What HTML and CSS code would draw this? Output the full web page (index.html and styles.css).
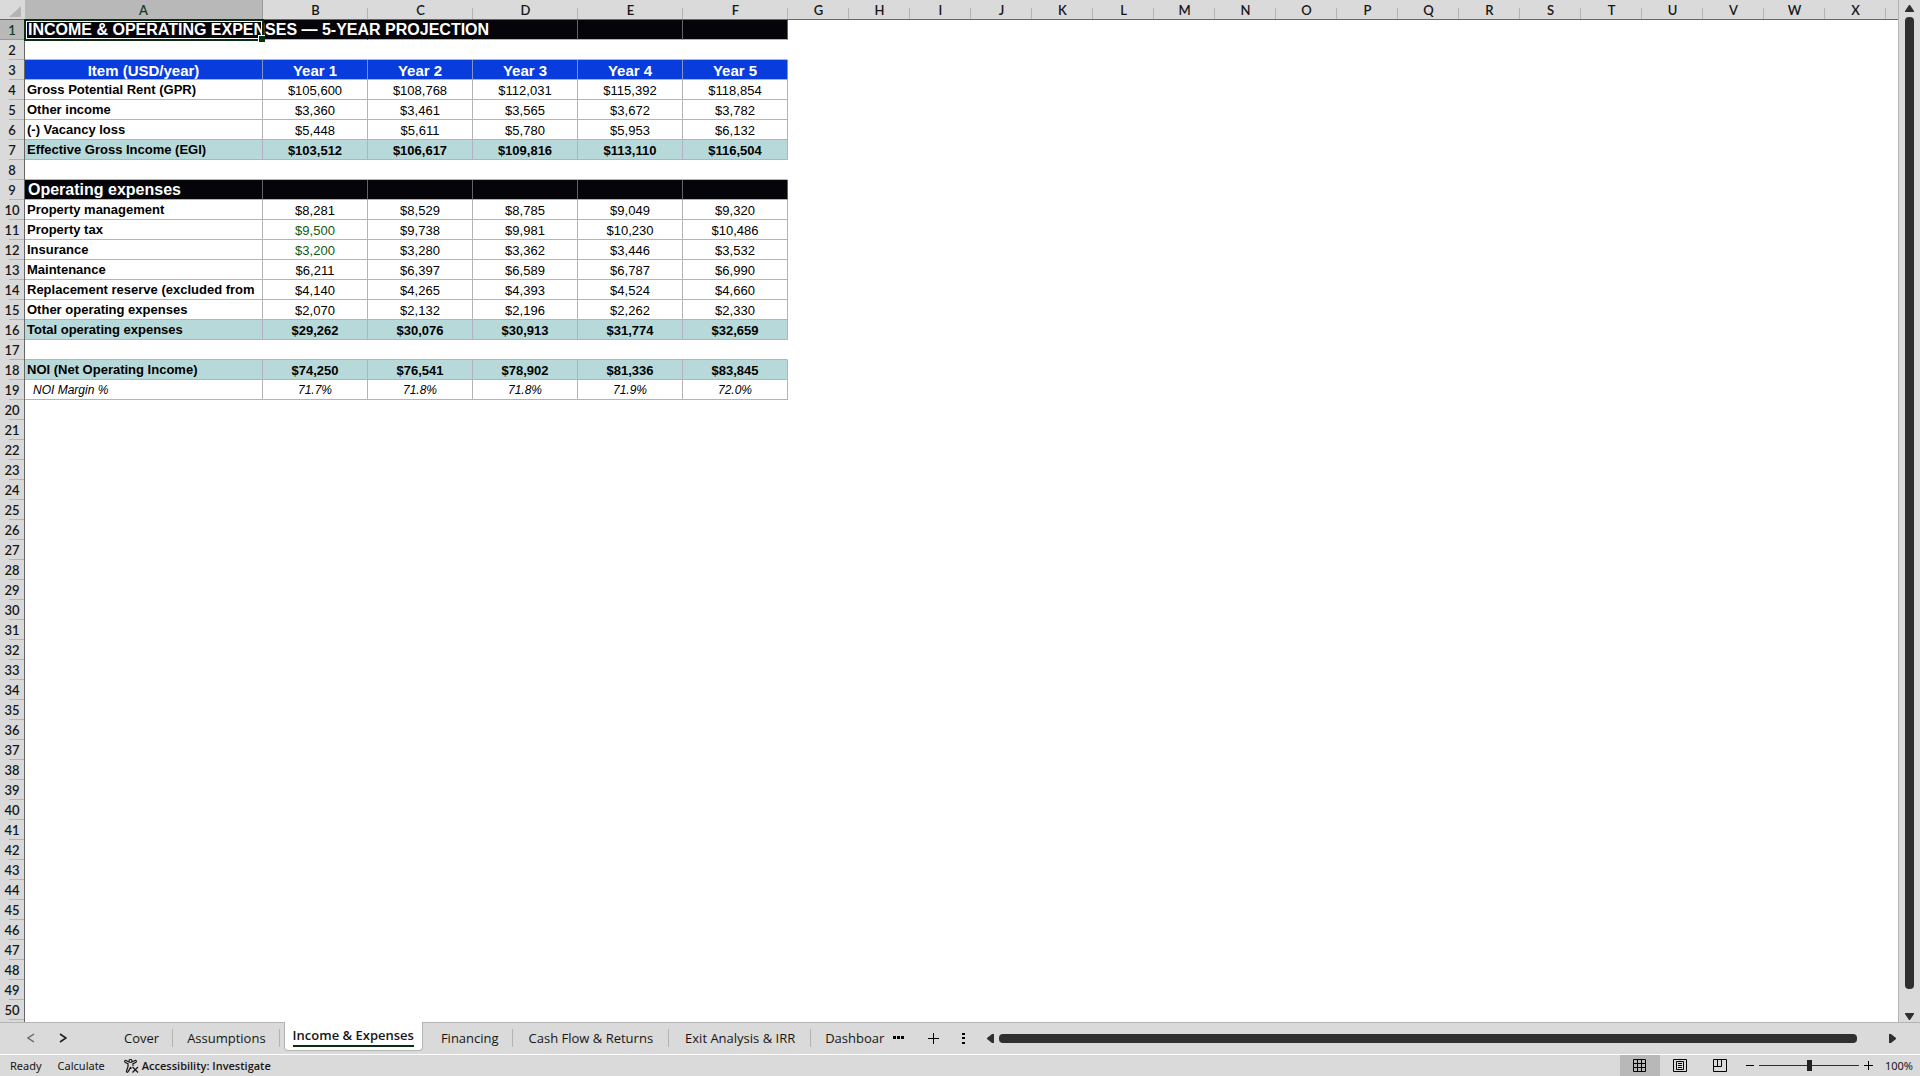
FILE: index.html
```html
<!DOCTYPE html>
<html lang="en">
<head>
<meta charset="utf-8">
<title>Income &amp; Expenses</title>
<link rel="stylesheet" href="styles.css">
</head>
<body>
<main class="workspace">
  <div class="grid-pane">
    <table class="sheet">
      <colgroup>
        <col class="col-index"><col class="col-item">
        <col class="col-year" span="5">
        <col class="col-empty" span="18">
        <col>
      </colgroup>
      <thead>
        <tr>
          <td class="corner"><svg width="12" height="11" viewBox="0 0 12 11"><path d="M12 0v11H0z" fill="#b4b4b4"/></svg></td>
          <th class="active">A</th><th>B</th><th>C</th><th>D</th><th>E</th><th>F</th><th>G</th><th>H</th><th>I</th><th>J</th><th>K</th><th>L</th><th>M</th><th>N</th><th>O</th><th>P</th><th>Q</th><th>R</th><th>S</th><th>T</th><th>U</th><th>V</th><th>W</th><th>X</th><td class="rest"></td>
        </tr>
      </thead>
      <tbody>
        <tr class="title"><th class="active">1</th><td class="selected">INCOME &amp; OPERATING EXPENSES — 5-YEAR PROJECTION</td><td class="open"></td><td class="open"></td><td></td><td></td><td></td></tr>
        <tr class="spacer"><th>2</th><td colspan="6"></td></tr>
        <tr class="years"><th>3</th><td>Item (USD/year)</td><td>Year 1</td><td>Year 2</td><td>Year 3</td><td>Year 4</td><td>Year 5</td></tr>
        <tr><th>4</th><td>Gross Potential Rent (GPR)</td><td>$105,600</td><td>$108,768</td><td>$112,031</td><td>$115,392</td><td>$118,854</td></tr>
        <tr><th>5</th><td>Other income</td><td>$3,360</td><td>$3,461</td><td>$3,565</td><td>$3,672</td><td>$3,782</td></tr>
        <tr><th>6</th><td>(-) Vacancy loss</td><td>$5,448</td><td>$5,611</td><td>$5,780</td><td>$5,953</td><td>$6,132</td></tr>
        <tr class="total"><th>7</th><td>Effective Gross Income (EGI)</td><td>$103,512</td><td>$106,617</td><td>$109,816</td><td>$113,110</td><td>$116,504</td></tr>
        <tr class="spacer"><th>8</th><td colspan="6"></td></tr>
        <tr class="title"><th>9</th><td>Operating expenses</td><td></td><td></td><td></td><td></td><td></td></tr>
        <tr><th>10</th><td>Property management</td><td>$8,281</td><td>$8,529</td><td>$8,785</td><td>$9,049</td><td>$9,320</td></tr>
        <tr><th>11</th><td>Property tax</td><td class="linked">$9,500</td><td>$9,738</td><td>$9,981</td><td>$10,230</td><td>$10,486</td></tr>
        <tr><th>12</th><td>Insurance</td><td class="linked">$3,200</td><td>$3,280</td><td>$3,362</td><td>$3,446</td><td>$3,532</td></tr>
        <tr><th>13</th><td>Maintenance</td><td>$6,211</td><td>$6,397</td><td>$6,589</td><td>$6,787</td><td>$6,990</td></tr>
        <tr><th>14</th><td>Replacement reserve (excluded from</td><td>$4,140</td><td>$4,265</td><td>$4,393</td><td>$4,524</td><td>$4,660</td></tr>
        <tr><th>15</th><td>Other operating expenses</td><td>$2,070</td><td>$2,132</td><td>$2,196</td><td>$2,262</td><td>$2,330</td></tr>
        <tr class="total"><th>16</th><td>Total operating expenses</td><td>$29,262</td><td>$30,076</td><td>$30,913</td><td>$31,774</td><td>$32,659</td></tr>
        <tr class="spacer"><th>17</th><td colspan="6"></td></tr>
        <tr class="total"><th>18</th><td>NOI (Net Operating Income)</td><td>$74,250</td><td>$76,541</td><td>$78,902</td><td>$81,336</td><td>$83,845</td></tr>
        <tr class="margin"><th>19</th><td>NOI Margin %</td><td>71.7%</td><td>71.8%</td><td>71.8%</td><td>71.9%</td><td>72.0%</td></tr>
      </tbody>
      <tbody class="blank">
        <tr><th>20</th></tr>
        <tr><th>21</th></tr>
        <tr><th>22</th></tr>
        <tr><th>23</th></tr>
        <tr><th>24</th></tr>
        <tr><th>25</th></tr>
        <tr><th>26</th></tr>
        <tr><th>27</th></tr>
        <tr><th>28</th></tr>
        <tr><th>29</th></tr>
        <tr><th>30</th></tr>
        <tr><th>31</th></tr>
        <tr><th>32</th></tr>
        <tr><th>33</th></tr>
        <tr><th>34</th></tr>
        <tr><th>35</th></tr>
        <tr><th>36</th></tr>
        <tr><th>37</th></tr>
        <tr><th>38</th></tr>
        <tr><th>39</th></tr>
        <tr><th>40</th></tr>
        <tr><th>41</th></tr>
        <tr><th>42</th></tr>
        <tr><th>43</th></tr>
        <tr><th>44</th></tr>
        <tr><th>45</th></tr>
        <tr><th>46</th></tr>
        <tr><th>47</th></tr>
        <tr><th>48</th></tr>
        <tr><th>49</th></tr>
        <tr><th>50</th></tr>
      </tbody>
    </table>
  </div>
  <div class="v-scroll">
    <button class="arrow" aria-label="Scroll up"><svg width="9" height="8" viewBox="0 0 9 8"><path d="M4 0h1l4 6v1H0V6z"/></svg></button>
    <div class="v-track"><div class="thumb"></div></div>
    <button class="arrow" aria-label="Scroll down"><svg width="9" height="8" viewBox="0 0 9 8"><path d="M4 7h1l4-6V0H0v1z"/></svg></button>
  </div>
</main>

<nav class="tab-bar" aria-label="Sheets">
  <div class="tab-arrows">
    <button aria-label="Previous sheet"><svg width="8" height="10" viewBox="0 0 8 10"><path d="M7 1L1 5l6 4" fill="none" stroke="#666" stroke-width="1.4"/></svg></button>
    <button aria-label="Next sheet"><svg width="8" height="10" viewBox="0 0 8 10"><path d="M1 1l6 4-6 4" fill="none" stroke="#222" stroke-width="1.7"/></svg></button>
  </div>
  <button class="tab">Cover</button>
  <button class="tab">Assumptions</button>
  <button class="tab current"><span>Income &amp; Expenses</span></button>
  <button class="tab">Financing</button>
  <button class="tab wide">Cash Flow &amp; Returns</button>
  <button class="tab wide">Exit Analysis &amp; IRR</button>
  <button class="tab last">Dashboar</button>
  <div class="tab-tools">
    <button aria-label="More sheets"><svg width="12" height="4" viewBox="0 0 12 4"><path d="M0 0h3v3H0zM4 0h3v3H4zM8 0h3v3H8z"/></svg></button>
    <button aria-label="New sheet"><svg width="11" height="11" viewBox="0 0 11 11"><path d="M5 0h1v5h5v1H6v5H5V6H0V5h5z"/></svg></button>
    <button aria-label="Resize tabs"><svg width="3" height="11" viewBox="0 0 3 11"><path d="M0 0h3v2H0zM0 4h3v2H0zM0 9h3v2H0z"/></svg></button>
  </div>
  <div class="h-scroll">
    <button class="arrow" aria-label="Scroll left"><svg width="7" height="9" viewBox="0 0 7 9"><path d="M0 4v1l5 4h2V0H5z"/></svg></button>
    <div class="h-track"><div class="thumb"></div></div>
    <button class="arrow" aria-label="Scroll right"><svg width="7" height="9" viewBox="0 0 7 9"><path d="M7 4v1L2 9H0V0h2z"/></svg></button>
  </div>
</nav>

<footer class="status-bar">
  <span>Ready</span>
  <span>Calculate</span>
  <button class="accessibility">
    <svg width="15" height="14" viewBox="0 0 15 14" fill="none" stroke="#161616" stroke-width="1.2"><circle cx="6.500" cy="2" r="1.500"/><path d="M5 3L2 1.500C.500 1 .200 3 1.300 3.500L4 4.700v3L2.500 12c-.3 1.500 1.200 1.700 1.700.6L6.500 8.500l1 1M8 3l3-1.500c1.500-.5 1.800 1.500.7 2L9 4.700V7M8.500 8l5.500 5.500M14 8l-5.500 5.500"/></svg>
    Accessibility: Investigate
  </button>
  <div class="views">
    <button class="view on" aria-label="Normal view"><svg width="13" height="13" viewBox="0 0 13 13"><path d="M.500.500h12v12H.500zM4.500 0v13M8.500 0v13M0 4.500h13M0 8.500h13"/></svg></button>
    <button class="view" aria-label="Page layout"><svg width="14" height="13" viewBox="0 0 14 13"><path d="M.500.500h13v12H.500zM3.500 2.500h7v8h-7zM5 4.500h4M5 6.500h4M5 8.500h4"/></svg></button>
    <button class="view" aria-label="Page break preview"><svg width="14" height="13" viewBox="0 0 14 13"><path d="M.500.500h13v12H.500zM.500 7.500h8v-7M4.500 0v7"/></svg></button>
  </div>
  <div class="zoom">
    <button aria-label="Zoom out"><svg width="8" height="9" viewBox="0 0 8 9"><path d="M0 4h8v1H0z"/></svg></button>
    <input type="range" min="0" max="100" value="51" aria-label="Zoom">
    <button aria-label="Zoom in"><svg width="9" height="9" viewBox="0 0 9 9"><path d="M4 0h1v4h4v1H5v4H4V5H0V4h4z"/></svg></button>
    <output>100%</output>
  </div>
</footer>
</body>
</html>
```
FILE: styles.css
```css
* { box-sizing: border-box; }

:root {
  --chrome: #dadada;
  --line: #b4b4b4;
  --ink: #161616;
  --thumb: #2f2f2f;
  --select: #0a2e12;
}

body {
  margin: 0;
  height: 100vh;
  display: flex;
  flex-direction: column;
  overflow: hidden;
  background: var(--chrome);
  color: var(--ink);
  font-family: "Open Sans", "Noto Sans", sans-serif;
}

button {
  display: flex;
  align-items: center;
  padding: 0;
  border: 0;
  background: none;
  color: inherit;
  font: inherit;
  white-space: nowrap;
}

svg { display: block; }

/* Worksheet */
.workspace { flex: 1; min-height: 0; display: flex; }

.grid-pane {
  flex: 1;
  min-width: 0;
  overflow: hidden;
  background: linear-gradient(to right, var(--chrome) 24px, #666 24px, #666 25px, #fff 25px);
  border-right: 1px solid var(--line);
}

.sheet {
  width: 100%;
  table-layout: fixed;
  border-spacing: 0;
  font: 13px/17px "Liberation Sans", Arial, sans-serif;
  color: #000;
}
.col-index { width: 25px; }
.col-item { width: 238px; }
.col-year { width: 105px; }
.col-empty { width: 61px; }

.sheet th, .sheet td { height: 20px; padding: 2px 0 0; }

.sheet thead th, .sheet thead td {
  background: linear-gradient(var(--line), var(--line)) right bottom / 1px 11px no-repeat var(--chrome);
  border-bottom: 1px solid #666;
}
.sheet thead .corner { padding: 3px 0 0 9px; background: var(--chrome); }
.sheet thead .rest { background: var(--chrome); }
.sheet th { font: 600 13px/17px Lato, "Open Sans", sans-serif; color: var(--ink); }
.sheet thead .active {
  background: #b8b8b8;
  border-right: 1px solid #999;
  color: #0f3d1c;
}

.sheet tbody th {
  background: linear-gradient(var(--line), var(--line)) right bottom / 15px 1px no-repeat var(--chrome);
  border-right: 1px solid #666;
}
.sheet tbody th { vertical-align: top; }
.sheet tbody .active { background: #b8b8b8; border-bottom: 1px solid #999; color: #0f3d1c; }

.sheet tbody td {
  border-right: 1px solid var(--line);
  border-bottom: 1px solid var(--line);
  text-align: center;
  white-space: nowrap;
}
.sheet tbody th + td { padding: 0 0 0 2px; text-align: left; font-weight: bold; line-height: 19px; }
.sheet .spacer td { border-right-color: transparent; }

.sheet .title td {
  background: #040409;
  border-right-color: #626270;
  color: #fff;
}
.sheet .title th + td { padding-left: 3px; font-size: 16px; }
.sheet .title .open { border-right-color: transparent; }
.sheet .title .selected { position: relative; border-right-color: transparent; }
.selected::before {
  content: "";
  position: absolute;
  inset: -1px -2px -2px -1px;
  border: 2px solid var(--select);
  outline: 1px solid #fff;
  outline-offset: -3px;
}
.selected::after {
  content: "";
  position: absolute;
  right: -3px;
  bottom: -3px;
  width: 6px;
  height: 6px;
  background: var(--select);
  border: solid #fff;
  border-width: 1px 0 0 1px;
}

.sheet .years td, .sheet .years th + td {
  padding: 2px 0 0;
  background: #083cdc;
  border-right-color: #7f93c4;
  color: #fff;
  font-size: 15px;
  font-weight: bold;
  line-height: 17px;
  text-align: center;
}
.sheet .total td { background: #b8d9da; border-color: #b4b0c8; font-weight: bold; }
.sheet .margin td { font-style: italic; font-size: 12px; }
.sheet .margin th + td { padding: 1px 0 0 8px; font-weight: normal; line-height: 18px; }
.sheet .linked { color: #0d5a14; }

/* Scroll bars */
.arrow { fill: var(--thumb); }
.thumb { background: var(--thumb); border-radius: 4px; }
.v-scroll {
  width: 21px;
  display: flex;
  flex-direction: column;
  align-items: center;
  padding: 5px 0 1px;
}
.v-track { flex: 1; padding-top: 4px; }
.v-track .thumb { width: 9px; height: 97.6%; }

/* Sheet tabs */
.tab-bar {
  height: 33px;
  display: flex;
  border-bottom: 1px solid #fff;
  font-size: 13px;
  background: linear-gradient(var(--line), var(--line)) top / 100% 1px no-repeat;
}
.tab-arrows { width: 110px; display: flex; gap: 24px; padding-left: 27px; }
.tab {
  justify-content: center;
  padding: 0 14px;
  background: linear-gradient(var(--line), var(--line)) right center / 1px 18px no-repeat;
}
.tab.wide { padding: 0 16px; }
.tab.last { padding-right: 9px; background: none; }
.tab.current {
  height: 29px;
  margin: 0 4px;
  padding: 0 8px;
  background: #fff;
  border: solid var(--line);
  border-width: 0 1px 1px;
  border-radius: 0 0 4px 4px;
  font-weight: 600;
}
.tab.current span { border-bottom: 2px solid var(--select); line-height: 20px; }
.tab-tools { display: flex; gap: 23px; margin-right: 22px; }
.h-scroll { flex: 1; display: flex; align-items: center; gap: 5px; padding-right: 24px; }
.h-track { flex: 1; }
.h-track .thumb { width: 97%; height: 9px; }

/* Status bar */
.status-bar {
  height: 21px;
  display: flex;
  align-items: center;
  padding-left: 10px;
  font: 11px/20px "Noto Sans", "Open Sans", sans-serif;
}
.status-bar span { margin-right: 16px; }
.accessibility { gap: 3px; margin-left: 3px; font: 600 11px/20px "Open Sans", sans-serif; }
.views { display: flex; align-self: stretch; margin-left: auto; }
.view { width: 40px; justify-content: center; }
.view svg { fill: none; stroke: #000; }
.view.on { background: #b8b8b8; }
.zoom { display: flex; align-items: center; gap: 5px; padding: 0 7px 0 6px; }
.zoom output { margin-left: 7px; }
.zoom input {
  appearance: none;
  width: 100px;
  height: 11px;
  margin: 0;
  background: linear-gradient(var(--thumb), var(--thumb)) center / 100% 1px no-repeat;
}
.zoom input::-webkit-slider-thumb {
  appearance: none;
  width: 5px;
  height: 11px;
  background: #222;
}
```
